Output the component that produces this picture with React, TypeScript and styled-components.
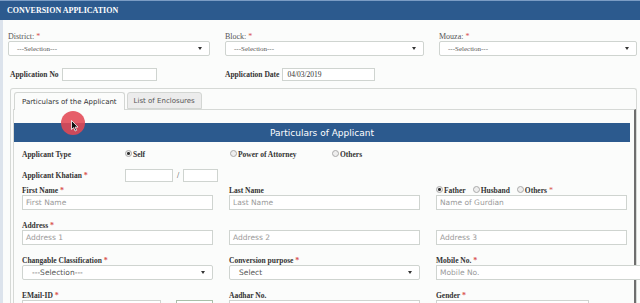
import React from "react";
import styled, { createGlobalStyle } from "styled-components";

const GlobalStyle = createGlobalStyle`
  body {
    margin: 0;
    background: #fbfcfb;
    font-family: "Liberation Serif", serif;
    font-size: 8px;
    line-height: 9px;
  }
`;

const Page = styled.div`
  position: relative;
  width: 640px;
  height: 303px;
  overflow: hidden;
  background: #fbfcfb;
`;

const Header = styled.div`
  height: 19px;
  background: #2c5a8e;
  border-top: 1px solid #7b9cc4;
  color: #fff;
  font: bold 8px "Liberation Serif", serif;
  display: flex;
  align-items: center;
  padding-left: 7px;
`;

const Body = styled.div`
  border-left: 3px solid #dce3ec;
  padding: 0 2px 0 5px;
  min-height: 283px;
`;

const TopGrid = styled.div`
  display: grid;
  grid-template-columns: 202px 199px 198px;
  column-gap: 15px;
  padding-top: 12px;
`;

const TopLabel = styled.div`
  font: 8px/9px "Liberation Serif", serif;
  color: #555;
`;

const Star = styled.span`
  color: #d9534f;
  font-size: 8px;
`;

const Select = styled.div<{ $sans?: boolean }>`
  height: 15px;
  box-sizing: border-box;
  border: 1px solid #cfd4d0;
  border-radius: 2px;
  background: #fff;
  display: flex;
  align-items: center;
  justify-content: space-between;
  padding: 0 7px 0 ${(p) => (p.$sans ? 9 : 8)}px;
  font: ${(p) => (p.$sans ? '7.5px "DejaVu Sans", sans-serif' : '7px "Liberation Serif", serif')};
  color: #555;
`;

const Arrow = styled.span`
  width: 0;
  height: 0;
  border-left: 2px solid transparent;
  border-right: 2px solid transparent;
  border-top: 3px solid #333;
`;

const AppRow = styled.div`
  display: grid;
  grid-template-columns: 202px 199px;
  column-gap: 15px;
  margin-top: 12px;
  height: 13px;
`;

const InlineField = styled.div<{ $pad?: number }>`
  display: flex;
  align-items: center;
  padding-left: ${(p) => p.$pad ?? 0}px;
  gap: 3px;
`;

const BoldLabel = styled.div`
  font: bold 7.5px/9px "Liberation Serif", serif;
  color: #333;
  white-space: nowrap;
`;

const SmallInput = styled.div<{ $w: number }>`
  width: ${(p) => p.$w}px;
  height: 13px;
  box-sizing: border-box;
  border: 1px solid #cfd4d0;
  background: #fff;
  font: 7.5px/11px "Liberation Serif", serif;
  color: #333;
  padding-left: 4px;
`;

const Panel = styled.div`
  margin: 7px 1px 0 2px;
  border: 1px solid #d6d9d6;
  border-bottom: none;
  border-radius: 3px 3px 0 0;
  padding: 3px 0 0 2px;
`;

const TabBar = styled.div`
  display: flex;
  gap: 2px;
  padding-left: 1px;
  height: 17px;
`;

const Tab = styled.div<{ $active?: boolean }>`
  box-sizing: border-box;
  height: ${(p) => (p.$active ? 18 : 17)}px;
  padding: 0 ${(p) => (p.$active ? 7 : 6)}px;
  display: flex;
  align-items: center;
  border: 1px solid #d3d6d3;
  border-bottom: ${(p) => (p.$active ? "none" : "1px solid #d3d6d3")};
  border-radius: 3px 3px 0 0;
  background: ${(p) => (p.$active ? "#fbfcfb" : "#ececec")};
  font: 7px "DejaVu Sans", sans-serif;
  color: ${(p) => (p.$active ? "#333" : "#555")};
  position: relative;
  z-index: 1;
`;

const Content = styled.div`
  border: 1px solid #d6d9d6;
  border-right: 2px solid #6e6e6e;
  border-bottom: none;
  padding: 13px 4px 0 0;
  min-height: 200px;
`;

const Banner = styled.div`
  height: 19px;
  background: #2c5a8e;
  color: #fff;
  font: 9px "DejaVu Sans", sans-serif;
  display: flex;
  align-items: center;
  justify-content: center;
`;

const Form = styled.div`
  padding-left: 8px;
`;

const TypeRow = styled.div`
  display: grid;
  grid-template-columns: 103px 105px 102px auto;
  align-items: center;
  height: 11px;
  margin-top: 7px;
`;

const Radio = styled.span<{ $checked?: boolean }>`
  display: inline-block;
  width: 5px;
  height: 5px;
  border-radius: 50%;
  border: 1px solid #a9a9a9;
  background: ${(p) => (p.$checked ? "radial-gradient(circle, #333 0 1.3px, #eee 1.6px)" : "#eee")};
  margin-right: 1px;
`;

const RadioText = styled.span`
  font: bold 7.5px "Liberation Serif", serif;
  color: #333;
`;

const RadioGroup = styled.div`
  display: flex;
  align-items: center;
  gap: 7px;
  height: 9px;
`;

const KhatianRow = styled.div`
  display: flex;
  align-items: center;
  height: 14px;
  margin-top: 8px;
`;

const LabelCell = styled.div<{ $w: number }>`
  width: ${(p) => p.$w}px;
`;

const Slash = styled.span`
  font: 8px "Liberation Serif", serif;
  color: #333;
  margin: 0 4px;
`;

const FieldGrid = styled.div`
  display: grid;
  grid-template-columns: repeat(3, 191px);
  column-gap: 16px;
  row-gap: 11px;
  margin-top: 4px;
`;

const Field = styled.div`
  display: flex;
  flex-direction: column;
`;

const Input = styled.div<{ $w?: number }>`
  width: ${(p) => (p.$w ? `${p.$w}px` : "100%")};
  height: 15px;
  box-sizing: border-box;
  border: 1px solid #cfd4d0;
  background: #fff;
  font: 7.5px/13px "DejaVu Sans", sans-serif;
  color: #9a9a9a;
  padding-left: 3px;
  white-space: nowrap;
`;

const EmailWrap = styled.div`
  display: flex;
  justify-content: space-between;
`;

const CaptchaBox = styled.div`
  width: 37px;
  height: 15px;
  box-sizing: border-box;
  border: 1px solid #a9bfa9;
  background: #fff;
`;

const Pointer = styled.div`
  position: absolute;
  left: 61px;
  top: 111px;
  width: 24px;
  height: 24px;
  border-radius: 50%;
  background: rgba(226, 72, 84, 0.88);
`;

const Cursor = styled.svg`
  position: absolute;
  left: 71px;
  top: 120px;
`;

type LabelProps = { text: string; req?: boolean };
const Label: React.FC<LabelProps> = ({ text, req }) => (
  <BoldLabel>
    {text} {req && <Star>*</Star>}
  </BoldLabel>
);

const App: React.FC = () => {
  return (
    <Page>
      <GlobalStyle />
      <Header>CONVERSION APPLICATION</Header>
      <Body>
        <TopGrid>
          {["District:", "Block:", "Mouza:"].map((l) => (
            <div key={l}>
              <TopLabel>
                {l} <Star>*</Star>
              </TopLabel>
              <Select>
                ---Selection---
                <Arrow />
              </Select>
            </div>
          ))}
        </TopGrid>

        <AppRow>
          <InlineField $pad={2}>
            <BoldLabel>Application No</BoldLabel>
            <SmallInput $w={95} />
          </InlineField>
          <InlineField>
            <BoldLabel>Application Date</BoldLabel>
            <SmallInput $w={93}>04/03/2019</SmallInput>
          </InlineField>
        </AppRow>

        <Panel>
          <TabBar>
            <Tab $active>Particulars of the Applicant</Tab>
            <Tab>List of Enclosures</Tab>
          </TabBar>
          <Content>
            <Banner>Particulars of Applicant</Banner>
            <Form>
              <TypeRow>
                <BoldLabel>Applicant Type</BoldLabel>
                <div>
                  <Radio $checked />
                  <RadioText>Self</RadioText>
                </div>
                <div>
                  <Radio />
                  <RadioText>Power of Attorney</RadioText>
                </div>
                <div>
                  <Radio />
                  <RadioText>Others</RadioText>
                </div>
              </TypeRow>

              <KhatianRow>
                <LabelCell $w={103}>
                  <Label text="Applicant Khatian" req />
                </LabelCell>
                <SmallInput $w={48} />
                <Slash>/</Slash>
                <SmallInput $w={35} />
              </KhatianRow>

              <FieldGrid>
                <Field>
                  <Label text="First Name" req />
                  <Input>First Name</Input>
                </Field>
                <Field>
                  <Label text="Last Name" />
                  <Input>Last Name</Input>
                </Field>
                <Field>
                  <RadioGroup>
                    <span>
                      <Radio $checked />
                      <RadioText>Father</RadioText>
                    </span>
                    <span>
                      <Radio />
                      <RadioText>Husband</RadioText>
                    </span>
                    <span>
                      <Radio />
                      <RadioText>Others</RadioText> <Star>*</Star>
                    </span>
                  </RadioGroup>
                  <Input>Name of Gurdian</Input>
                </Field>

                <Field>
                  <Label text="Address" req />
                  <Input>Address 1</Input>
                </Field>
                <Field>
                  <BoldLabel>&nbsp;</BoldLabel>
                  <Input>Address 2</Input>
                </Field>
                <Field>
                  <BoldLabel>&nbsp;</BoldLabel>
                  <Input>Address 3</Input>
                </Field>

                <Field>
                  <Label text="Changable Classification" req />
                  <Select $sans>
                    ---Selection---
                    <Arrow />
                  </Select>
                </Field>
                <Field>
                  <Label text="Conversion purpose" req />
                  <Select $sans>
                    Select
                    <Arrow />
                  </Select>
                </Field>
                <Field>
                  <Label text="Mobile No." req />
                  <Input $w={205}>Mobile No.</Input>
                </Field>

                <Field>
                  <Label text="EMail-ID" req />
                  <EmailWrap>
                    <Input $w={139} />
                    <CaptchaBox />
                  </EmailWrap>
                </Field>
                <Field>
                  <Label text="Aadhar No." />
                  <Input />
                </Field>
                <Field>
                  <Label text="Gender" req />
                  <Input $w={153} />
                </Field>
              </FieldGrid>
            </Form>
          </Content>
        </Panel>
      </Body>
      <Pointer />
      <Cursor width="8" height="12" viewBox="0 0 8 12">
        <path d="M0.5 0.5 L0.5 9.5 L2.6 7.6 L4.2 11 L5.6 10.3 L4.1 7.1 L7 7.1 Z" fill="#111" stroke="#fff" strokeWidth="0.8" />
      </Cursor>
    </Page>
  );
};

export default App;
